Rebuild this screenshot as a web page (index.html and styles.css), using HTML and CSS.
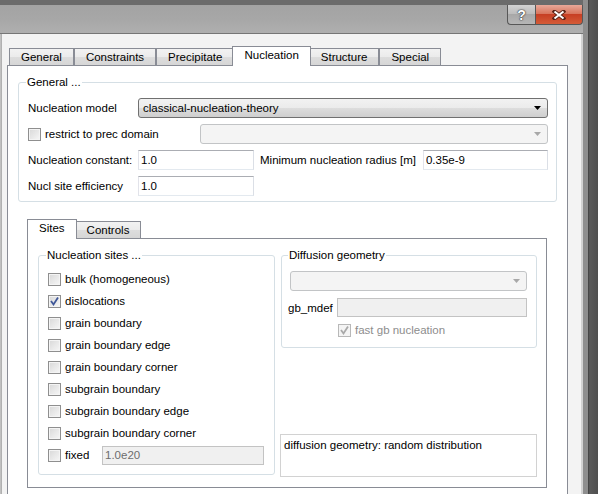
FILE: index.html
```html
<!DOCTYPE html>
<html lang="en">

<head>
    <meta charset="UTF-8">
    <title>Nucleation</title>
    <link rel="stylesheet" href="styles.css">
</head>

<body>

    <div class="window">
        <div class="main">
            <div class="titlebar">
                <div class="caption-btn btn-help">?</div>
                <div class="caption-btn btn-close">
                    <svg width="14" height="10" viewBox="0 0 14 10">
                        <path d="M2.5 1.5 L11.5 8.5 M11.5 1.5 L2.5 8.5" stroke="#5a2418" stroke-width="3.8" stroke-linecap="square" fill="none"/>
                        <path d="M2.5 1.5 L11.5 8.5 M11.5 1.5 L2.5 8.5" stroke="#ffffff" stroke-width="2" fill="none"/>
                    </svg>
                </div>
            </div>

            <div class="frame">
                <div class="lframe"></div>
                <div class="client">

                    <div class="tabs">
                        <div class="tab">General</div>
                        <div class="tab">Constraints</div>
                        <div class="tab">Precipitate</div>
                        <div class="tab active">Nucleation</div>
                        <div class="tab">Structure</div>
                        <div class="tab">Special</div>
                    </div>

                    <div class="pane">
                        <fieldset class="group">
                            <legend>General ...</legend>

                            <div class="row">
                                <label class="lbl">Nucleation model</label>
                                <div class="combo">
                                    <span>classical-nucleation-theory</span>
                                    <svg width="7" height="4" viewBox="0 0 7 4"><path d="M0 0 H7 L3.5 4 Z" fill="#000"/></svg>
                                </div>
                            </div>

                            <div class="row">
                                <div class="checkfield"><span class="check"></span>restrict to prec domain</div>
                                <div class="combo disabled">
                                    <span></span>
                                    <svg width="7" height="4" viewBox="0 0 7 4"><path d="M0 0 H7 L3.5 4 Z" fill="#a8a8a8"/></svg>
                                </div>
                            </div>

                            <div class="row">
                                <label class="lbl">Nucleation constant:</label>
                                <input class="text short" value="1.0">
                                <label class="lbl-mid">Minimum nucleation radius [m]</label>
                                <input class="text grow" value="0.35e-9">
                            </div>

                            <div class="row">
                                <label class="lbl">Nucl site efficiency</label>
                                <input class="text short" value="1.0">
                            </div>
                        </fieldset>

                        <div class="subtabs">
                            <div class="tabs">
                                <div class="tab active">Sites</div>
                                <div class="tab">Controls</div>
                            </div>

                            <div class="subpane">
                                <fieldset class="group sites">
                                    <legend>Nucleation sites ...</legend>
                                    <div class="checkrow"><span class="check"></span>bulk (homogeneous)</div>
                                    <div class="checkrow">
                                        <span class="check">
                                            <svg width="11" height="11" viewBox="0 0 11 11"><path d="M2 5 L4.5 8.5 L9 1.5" stroke="#3f5798" stroke-width="1.8" fill="none"/></svg>
                                        </span>dislocations
                                    </div>
                                    <div class="checkrow"><span class="check"></span>grain boundary</div>
                                    <div class="checkrow"><span class="check"></span>grain boundary edge</div>
                                    <div class="checkrow"><span class="check"></span>grain boundary corner</div>
                                    <div class="checkrow"><span class="check"></span>subgrain boundary</div>
                                    <div class="checkrow"><span class="check"></span>subgrain boundary edge</div>
                                    <div class="checkrow"><span class="check"></span>subgrain boundary corner</div>
                                    <div class="checkrow">
                                        <span class="check"></span>fixed
                                        <input class="text disabled fixed-val" value="1.0e20" disabled>
                                    </div>
                                </fieldset>

                                <div class="side">
                                    <fieldset class="group diffusion">
                                        <legend>Diffusion geometry</legend>
                                        <div class="combo disabled">
                                            <span></span>
                                            <svg width="7" height="4" viewBox="0 0 7 4"><path d="M0 0 H7 L3.5 4 Z" fill="#a8a8a8"/></svg>
                                        </div>
                                        <div class="mdef-row">
                                            <label class="lbl-short">gb_mdef</label>
                                            <input class="text disabled grow" value="" disabled>
                                        </div>
                                        <div class="fast-row">
                                            <span class="check off">
                                                <svg width="11" height="11" viewBox="0 0 11 11"><path d="M2 5 L4.5 8.5 L9 1.5" stroke="#a9a9a9" stroke-width="1.8" fill="none"/></svg>
                                            </span>fast gb nucleation
                                        </div>
                                    </fieldset>

                                    <div class="note">diffusion geometry: random distribution</div>
                                </div>
                            </div>
                        </div>
                    </div>

                </div>
            </div>
        </div>
        <div class="rframe"></div>
    </div>

</body>

</html>
```

FILE: styles.css
```css
* {
    box-sizing: border-box;
}

body {
    margin: 0;
    background: #ffffff;
    font-family: "Liberation Sans", Arial, sans-serif;
    font-size: 11.5px;
    color: #000;
}

.window {
    display: flex;
    width: 598px;
    height: 494px;
    overflow: hidden;
}

.main {
    width: 583px;
    flex: none;
    display: flex;
    flex-direction: column;
}

/* title bar */

.titlebar {
    flex: none;
    height: 34px;
    display: flex;
    justify-content: flex-end;
    align-items: flex-start;
    border-top: 5px solid #6b6b6b;
    border-bottom: 1px solid #767676;
    background: linear-gradient(#a3a3a3, #a7a7a7 50%, #afafaf);
}

.caption-btn {
    height: 20px;
    display: flex;
    align-items: center;
    justify-content: center;
    border: 1px solid #575757;
    border-top: none;
}

.btn-help {
    width: 28px;
    border-right: none;
    border-radius: 0 0 0 4px;
    background: linear-gradient(#d2d2d2, #bdbdbd 45%, #a8a8a8 50%, #b6b6b6);
    color: #fff;
    font-weight: bold;
    font-size: 14px;
    text-shadow: 0 0 1px #333, 0 0 1px #333, 0 0 2px #555;
}

.btn-close {
    width: 48px;
    border-radius: 0 0 4px 0;
    background: linear-gradient(#e9a899, #d8765e 45%, #c73f24 50%, #d45b37);
}

/* frame + client */

.frame {
    flex: 1;
    display: flex;
    min-height: 0;
}

.lframe {
    width: 2px;
    flex: none;
    background: linear-gradient(to right, #c9c9c9, #a8a8a8);
}

.client {
    width: 581px;
    flex: none;
    min-width: 0;
    background: #f3f3f3;
    padding: 12px 13px 0 5px;
    border-right: 2px solid #d2d2d2;
}

.rframe {
    width: 15px;
    flex: none;
    background: linear-gradient(to right, #8e8e8e, #8e8e8e 30%, #3d3d3d 33%, #5a5a5a 45%, #4f4f4f);
}

/* tabs */

.tabs {
    display: flex;
    align-items: flex-end;
    height: 19px;
    padding-left: 2px;
}

.tab {
    height: 17px;
    padding: 0 11px;
    line-height: 16px;
    white-space: nowrap;
    border: 1px solid #898c95;
    border-bottom: none;
    background: linear-gradient(#f2f2f2, #ebebeb 50%, #dddddd 50%, #d6d6d6);
}

.tab.active {
    position: relative;
    z-index: 1;
    height: 20px;
    margin: 0 -2px -1px;
    line-height: 17px;
    background: #fff;
}

.pane {
    background: #fff;
    border: 1px solid #898c95;
    padding: 9px 10px 40px;
}

/* group boxes */

.group {
    margin: 0;
    min-width: 0;
    padding: 9px 8px 5px 9px;
    border: 1px solid #d5dfe5;
    border-radius: 3px;
}

.group legend {
    padding: 0 1px;
    margin-left: -2px;
    line-height: 14px;
}

.row {
    display: flex;
    align-items: center;
    height: 20px;
}

.row + .row {
    margin-top: 6px;
}

.lbl {
    width: 110px;
    flex: none;
}

.lbl-mid {
    margin: 0 7px 0 6px;
    white-space: nowrap;
}

.combo {
    flex: 1;
    height: 20px;
    display: flex;
    align-items: center;
    justify-content: space-between;
    padding: 0 6px 0 4px;
    border: 1px solid #707070;
    border-radius: 3px;
    background: linear-gradient(#f2f2f2, #ebebeb 50%, #dddddd 50%, #cfcfcf);
}

.combo.disabled {
    border-color: #c2c4c6;
    background: #f4f4f4;
}

.checkfield {
    width: 172px;
    flex: none;
    display: flex;
    align-items: center;
    gap: 4px;
}

.text {
    height: 20px;
    padding: 0 2px;
    border: 1px solid;
    border-color: #abadb3 #dbdfe6 #e3e9ef #e2e3ea;
    font: inherit;
    color: #000;
    background: #fff;
    outline: none;
}

.text.disabled {
    background: #f0f0f0;
    border-color: #c3c3c3;
    color: #6d6d6d;
}

.short {
    width: 116px;
    flex: none;
}

.grow {
    flex: 1;
    width: 0;
    min-width: 0;
}

.check {
    width: 13px;
    height: 13px;
    flex: none;
    display: flex;
    align-items: center;
    justify-content: center;
    border: 1px solid #8f8f8f;
    background: linear-gradient(135deg, #d8d8d8, #f7f7f7);
    box-shadow: inset 0 0 0 1px #f4f4f4;
}

.check.off {
    border-color: #b8b8b8;
    background: #f4f4f4;
}

/* inner tab control */

.subtabs {
    margin: 17px 10px 0 9px;
}

.subpane {
    display: flex;
    gap: 5px;
    padding: 9px 9px 12px 10px;
    border: 1px solid #898c95;
    background: #fff;
}

.sites {
    width: 237px;
    flex: none;
    padding: 6px 10px 8px 9px;
}

.checkrow {
    display: flex;
    align-items: center;
    gap: 4px;
    height: 22px;
}

.fixed-val {
    width: 162px;
    height: 19px;
    margin-left: auto;
}

.side {
    flex: 1;
    min-width: 0;
    display: flex;
    flex-direction: column;
    justify-content: space-between;
}

.diffusion {
    margin-left: 1px;
    padding: 9px 9px 10px 8px;
}

.mdef-row {
    display: flex;
    align-items: center;
    height: 19px;
    margin-top: 7px;
}

.mdef-row .text {
    height: 19px;
}

.lbl-short {
    width: 49px;
    flex: none;
    margin-left: -2px;
}

.fast-row {
    display: flex;
    align-items: center;
    gap: 4px;
    height: 14px;
    margin-top: 6px;
    padding-left: 48px;
    color: #8d8d8d;
}

.note {
    height: 43px;
    margin-bottom: -2px;
    padding: 3px;
    line-height: 14px;
    border: 1px solid #d2d2d2;
}
```
